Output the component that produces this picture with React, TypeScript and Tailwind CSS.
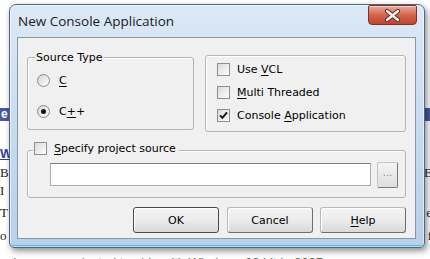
import React from "react";

const ui = "font-['DejaVu_Sans',sans-serif] text-[11px] leading-[13px] text-black";

const Radio = ({ checked }: { checked?: boolean }) => (
  <span className="flex h-[13px] w-[13px] shrink-0 items-center justify-center rounded-full border border-[#8b8b8b] bg-gradient-to-br from-[#d4d4d4] to-white">
    {checked && <span className="h-[5px] w-[5px] rounded-full bg-[#151515]" />}
  </span>
);

const Check = ({ checked }: { checked?: boolean }) => (
  <span className="flex h-[13px] w-[13px] shrink-0 items-center justify-center border border-[#8e8f8f] bg-gradient-to-br from-[#dadada] to-white">
    {checked && (
      <svg width="9" height="9" viewBox="0 0 9 9">
        <path d="M1 4.3 L3.4 6.8 L8 1.4" fill="none" stroke="#111" strokeWidth="1.9" />
      </svg>
    )}
  </span>
);

const Btn = ({ children, def }: { children: React.ReactNode; def?: boolean }) => (
  <button
    className={`flex h-[26px] w-[86px] items-center justify-center rounded-[3px] border bg-gradient-to-b from-[#f4f4f4] via-[#ececec] to-[#d9d9d9] shadow-[inset_1px_1px_0_#ffffff] ${
      def ? "border-[#4a4a4a]" : "border-[#b9b9b9] border-r-[#6e6e6e] border-b-[#6e6e6e]"
    } ${ui}`}
  >
    {children}
  </button>
);

const CloseBtn = () => (
  <div className="flex h-[20px] w-[49px] items-center justify-center rounded-b-[4px] rounded-t-[2px] border border-[#7a3325] bg-gradient-to-b from-[#e9ab9b] via-[#d3644c] to-[#c2432b] shadow-[inset_0_1px_0_rgba(255,255,255,0.5)]">
    <svg width="17" height="13" viewBox="0 0 17 13">
      <path d="M3 2 L14 11 M14 2 L3 11" stroke="#5a2a22" strokeWidth="4.2" strokeLinecap="round" />
      <path d="M3 2 L14 11 M14 2 L3 11" stroke="#f4f4f4" strokeWidth="2.4" strokeLinecap="round" />
    </svg>
  </div>
);

const BgLine = ({ left, right, className = "" }: { left?: React.ReactNode; right?: React.ReactNode; className?: string }) => (
  <div className={`flex h-[13px] items-center justify-between ${className}`}>
    <span>{left}</span>
    <span className="-mr-[2px]">{right}</span>
  </div>
);

export default function App() {
  return (
    <div className="relative h-[259px] w-[430px] overflow-hidden bg-white font-['Liberation_Serif',serif] text-[13px] leading-[13px] text-[#222]">
      {/* page behind the dialog */}
      <div className="flex flex-col pt-[108px]">
        <div className="flex h-[13px] items-center bg-[#4b56a6] pl-[1px] font-['Liberation_Sans',sans-serif] text-[12px] font-bold text-white">
          e Console Wizard
        </div>
        <BgLine className="mt-[26px] font-['Liberation_Sans',sans-serif] font-bold" left={<span className="text-[#2e3fa0] underline">W</span>} />
        <BgLine className="mt-[6px]" left="Bo" right="E" />
        <BgLine className="mt-[5px]" left="I" />
        <BgLine className="mt-[9px]" left="T" right="e" />
        <BgLine className="mt-[10px]" left="o" right="f" />
        <div className="mt-[14px] pl-[13px] font-['Liberation_Sans',sans-serif] text-[#666]">Icon was selected to ship with Windows 32 bit in 2007</div>
      </div>

      {/* dialog window */}
      <div className="absolute left-[9px] top-[4px] flex h-[244px] w-[416px] flex-col rounded-b-[5px] rounded-t-[7px] border border-[#4d6883] bg-gradient-to-b from-[#dce9f6] via-[#c8dbef] to-[#b8d0e8] shadow-[2px_3px_6px_rgba(0,0,0,0.45),inset_0_0_0_1px_rgba(255,255,255,0.55),inset_0_-2px_0_#56b8e0]">
        <div className="flex h-[32px] items-start justify-between pl-[8px] pr-[7px]">
          <span className="mt-[7px] font-['Open_Sans',sans-serif] text-[13.5px] leading-[18px] text-[#1b1b1b]">
            New Console Application
          </span>
          <CloseBtn />
        </div>

        <div className={`ml-[7px] flex h-[202px] w-[399px] flex-col border border-[#8497ab] bg-[#f0f0f0] px-[9px] pt-[17px] ${ui}`}>
          <div className="flex items-start gap-[11px]">
            <div className="relative mt-[2px] flex h-[73px] w-[167px] flex-col gap-[18px] rounded-[3px] border border-[#b4b4b4] pl-[9px] pt-[16px] shadow-[inset_1px_1px_0_#fff]">
              <span className="absolute -top-[7px] left-[7px] bg-[#f0f0f0] px-[1px]">Source Type</span>
              <label className="flex items-center gap-[9px]">
                <Radio />
                <span className="underline underline-offset-2">C</span>
              </label>
              <label className="flex items-center gap-[9px]">
                <Radio checked />
                <span>
                  C<u className="underline-offset-2">+</u>+
                </span>
              </label>
            </div>

            <div className="flex h-[77px] w-[201px] flex-col gap-[10px] rounded-[3px] border border-[#b4b4b4] pl-[11px] pt-[7px] shadow-[inset_1px_1px_0_#fff]">
              <label className="flex items-center gap-[7px]">
                <Check />
                <span>
                  Use <u className="underline-offset-2">V</u>CL
                </span>
              </label>
              <label className="flex items-center gap-[7px]">
                <Check />
                <span>
                  <u className="underline-offset-2">M</u>ulti Threaded
                </span>
              </label>
              <label className="flex items-center gap-[7px]">
                <Check checked />
                <span>
                  Console <u className="underline-offset-2">A</u>pplication
                </span>
              </label>
            </div>
          </div>

          <div className="relative mt-[18px] flex h-[48px] items-center gap-[6px] rounded-[3px] border border-[#b4b4b4] pl-[22px] pt-[1px] shadow-[inset_1px_1px_0_#fff]">
            <label className="absolute -top-[9px] left-[5px] flex items-center gap-[7px] bg-[#f0f0f0] pl-[1px] pr-[3px]">
              <Check />
              <span>
                <u className="underline-offset-2">S</u>pecify project source
              </span>
            </label>
            <div className="h-[23px] w-[321px] border border-[#a9adb5] border-t-[#7c8088] bg-white" />
            <button className="flex h-[26px] w-[21px] items-center justify-center rounded-[2px] border border-[#c4c4c4] border-b-[#7a7a7a] border-r-[#7a7a7a] bg-gradient-to-b from-[#f4f4f4] to-[#dedede] pb-[4px] text-[10px] leading-[10px] text-[#8a8a8a]">
              ...
            </button>
          </div>

          <div className="mt-[9px] flex justify-end">
            <Btn def>OK</Btn>
            <div className="ml-[8px]">
              <Btn>Cancel</Btn>
            </div>
            <div className="ml-[7px]">
              <Btn>
                <u className="underline-offset-2">H</u>elp
              </Btn>
            </div>
          </div>
        </div>
      </div>
    </div>
  );
}
